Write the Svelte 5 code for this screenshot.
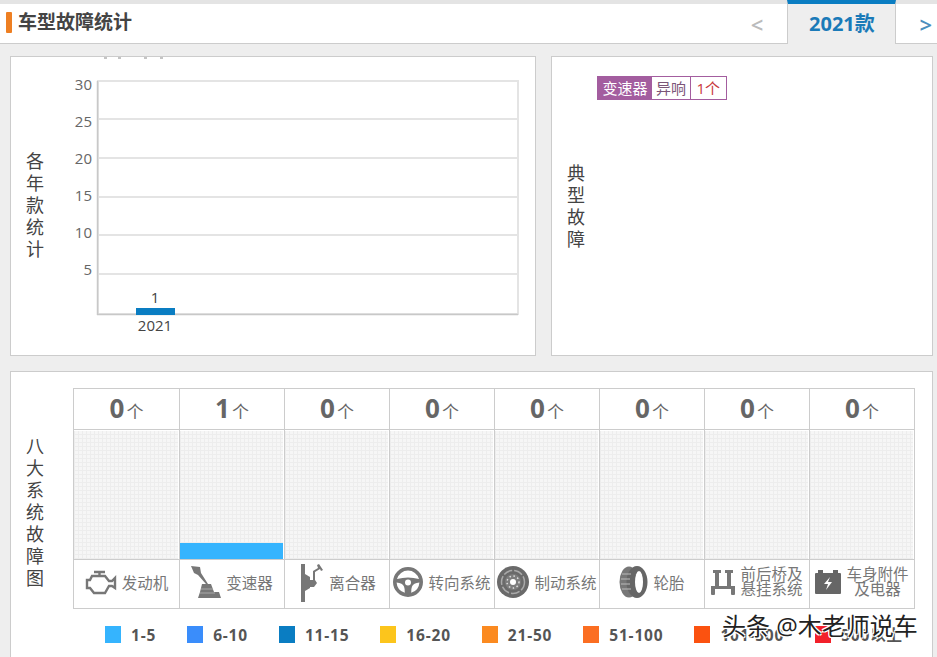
<script lang="ts">
  // y labels and grid lines don't share the same step in the original chart
  const yLabels = [
    { text: '30', y: 90 },
    { text: '25', y: 127 },
    { text: '20', y: 164 },
    { text: '15', y: 201 },
    { text: '10', y: 238 },
    { text: '5', y: 275 }
  ];
  const gridLines = [119, 158, 197, 235, 274];

  const systems = [
    { count: 0, icon: 'engine', label: ['发动机'] },
    { count: 1, icon: 'gearbox', label: ['变速器'] },
    { count: 0, icon: 'clutch', label: ['离合器'] },
    { count: 0, icon: 'steering', label: ['转向系统'] },
    { count: 0, icon: 'brake', label: ['制动系统'] },
    { count: 0, icon: 'tire', label: ['轮胎'] },
    { count: 0, icon: 'axle', label: ['前后桥及', '悬挂系统'] },
    { count: 0, icon: 'battery', label: ['车身附件', '及电器'] }
  ];

  const legend = [
    { text: '1-5', color: '#35b4fe' },
    { text: '6-10', color: '#3a8dfb' },
    { text: '11-15', color: '#0a7dc2' },
    { text: '16-20', color: '#fcc51c' },
    { text: '21-50', color: '#fb8a20' },
    { text: '51-100', color: '#fb6e22' },
    { text: '101-500', color: '#fb5210' },
    { text: '500以上', color: '#f2202a' }
  ];
</script>

<div class="page">
  <header class="top">
    <div class="title"><i class="mark"></i><span class="title-text">车型故障统计</span></div>
    <span class="arrow prev">&lt;</span>
    <div class="tab">2021款</div>
    <span class="arrow next">&gt;</span>
  </header>

  <div class="panels">
    <section class="panel">
      <svg class="chart" viewBox="11 57 524 298" width="524" height="298">
        <g fill="#c4c4c4">
          <rect x="104" y="57" width="3" height="2" />
          <rect x="118" y="57" width="3" height="2" />
          <rect x="144" y="57" width="3" height="2" />
          <rect x="160" y="57" width="3" height="2" />
        </g>
        <rect x="98" y="81" width="420" height="233" fill="none" stroke="#e4e4e4" stroke-width="2" />
        {#each gridLines as y}
          <line x1="98" x2="518" y1={y} y2={y} stroke="#e4e4e4" stroke-width="2" />
        {/each}
        <line x1="97.5" x2="97.5" y1="81" y2="315" stroke="#c8c8c8" stroke-width="1.5" />
        <line x1="97" x2="518" y1="314.5" y2="314.5" stroke="#c8c8c8" stroke-width="1.5" />
        {#each yLabels as l}
          <text class="ylabel" x="92" y={l.y} text-anchor="end">{l.text}</text>
        {/each}
        <rect x="136" y="308" width="39" height="7" fill="#0a7dc2" />
        <text class="xlabel" x="155" y="303" text-anchor="middle">1</text>
        <text class="xlabel" x="155" y="331" text-anchor="middle">2021</text>
        <foreignObject x="26" y="150" width="18" height="112">
          <div class="vlabel">各年款统计</div>
        </foreignObject>
      </svg>
    </section>

    <section class="panel faults">
      <div class="vlabel">典型故障</div>
      <div class="tag">
        <span class="tag-name">变速器</span>
        <span class="tag-type">异响</span>
        <span class="tag-count">1个</span>
      </div>
    </section>
  </div>

  <section class="panel systems">
    <div class="systems-row">
      <div class="side"><div class="vlabel">八大系统故障图</div></div>
      <div class="table">
        {#each systems as s}
          <div class="col">
            <div class="count"><b>{s.count}</b>个</div>
            <div class="plot">
              {#if s.count > 0}
                <div class="bar" style="height: {s.count * 16}px"></div>
              {/if}
            </div>
            <div class="sys">
              {#if s.icon === 'engine'}
                <svg width="32" height="25" viewBox="0 0 32 25" fill="none" stroke="#777" stroke-width="2.4">
                  <path d="M9 2h11M14.500 2v4M7 6h13l4 5h3l3-3v10l-3-2h-3l-4 7H9l-4-5H2V10h3z" />
                </svg>
              {:else if s.icon === 'gearbox'}
                <svg width="30" height="34" viewBox="0 0 30 34" fill="#777">
                  <path d="M0 1l9 1 1 6 7 11h-2L7 10 3 8z" />
                  <path d="M11 19h9l3 8h5l2 6H7l2-6z" />
                  <path d="M10 24h12M9 28h15" stroke="#aaa" stroke-width="1" />
                </svg>
              {:else if s.icon === 'clutch'}
                <svg width="26" height="39" viewBox="0 0 26 39" fill="#777">
                  <rect x="3" y="1" width="4" height="38" />
                  <path d="M7 11l5 3v11l-5 3z" />
                  <path d="M12 17h5l2 3-3 4h-4z" />
                  <path d="M15 18V8l5-3-1-3 2-1 4 6-2 1-1-2-5 3v9z" />
                </svg>
              {:else if s.icon === 'steering'}
                <svg width="30" height="30" viewBox="0 0 30 30" fill="#777">
                  <path fill-rule="evenodd" d="M15 0a15 15 0 1 1 0 30a15 15 0 1 1 0-30zM15 3.500a11.500 11.500 0 0 0-11 8.500q11-3 22 0a11.500 11.500 0 0 0-11-8.500zM3.600 15.500q6 .5 7.400 4 1 2.500.8 6.300A11.500 11.500 0 0 1 3.600 15.500zM26.400 15.500q-6 .5-7.400 4-1 2.500-.8 6.300A11.500 11.500 0 0 0 26.400 15.500zM15 12.500a3 3 0 1 0 0 6a3 3 0 1 0 0-6z" />
                </svg>
              {:else if s.icon === 'brake'}
                <svg width="32" height="32" viewBox="0 0 32 32">
                  <circle cx="16" cy="16" r="16" fill="#6a6a6a" />
                  <circle cx="16" cy="16" r="11.500" fill="none" stroke="#aaa" stroke-width="1.500" stroke-dasharray="9 2" />
                  <circle cx="16" cy="16" r="8" fill="#7d7d7d" />
                  <circle cx="16" cy="16" r="6" fill="none" stroke="#ddd" stroke-width="1.500" stroke-dasharray="1.500 2.500" />
                  <circle cx="16" cy="16" r="3" fill="#fff" />
                </svg>
              {:else if s.icon === 'tire'}
                <svg width="29" height="32" viewBox="0 0 29 32">
                  <ellipse cx="10" cy="16" rx="9.500" ry="15.500" fill="#777" />
                  <ellipse cx="18" cy="16" rx="10.500" ry="16" fill="#666" />
                  <ellipse cx="20" cy="16" rx="4" ry="11" fill="#fff" />
                  <path d="M3 8h9M2 13h9M2 18h9M3 23h9" stroke="#bbb" stroke-width="1.200" />
                </svg>
              {:else if s.icon === 'axle'}
                <svg width="24" height="26" viewBox="0 0 24 26" fill="#777">
                  <rect x="2" y="1" width="8" height="3" />
                  <rect x="14" y="1" width="8" height="3" />
                  <rect x="4" y="1" width="4" height="19" />
                  <rect x="16" y="1" width="4" height="19" />
                  <rect x="0" y="17" width="24" height="3" />
                  <rect x="0" y="17" width="4" height="9" rx="1" />
                  <rect x="20" y="17" width="4" height="9" rx="1" />
                </svg>
              {:else if s.icon === 'battery'}
                <svg width="26" height="24" viewBox="0 0 26 24" fill="#666">
                  <rect x="3" y="0" width="5" height="3" />
                  <rect x="18" y="0" width="5" height="3" />
                  <rect x="0" y="3" width="26" height="21" rx="1" />
                  <path d="M15 7l-6 7h4l-2 6 6-8h-4z" fill="#fff" />
                </svg>
              {/if}
              <div class="sys-name" class:double={s.label.length > 1}>
                {#each s.label as line}
                  <div>{line}</div>
                {/each}
              </div>
            </div>
          </div>
        {/each}
      </div>
    </div>

    <div class="legend">
      {#each legend as item}
        <div class="legend-item">
          <i class="swatch" style="background: {item.color}"></i>
          {item.text}
        </div>
      {/each}
    </div>
  </section>

  <div class="watermark">头条 @木老师说车</div>
</div>

<style>
  :global(body) {
    margin: 0;
    background: #eee;
  }

  .page {
    position: relative;
    width: 937px;
    height: 657px;
    overflow: hidden;
    background: #eee;
    font-family: "Open Sans", "Noto Sans CJK SC", sans-serif;
    color: #444;
  }

  .top {
    display: flex;
    align-items: center;
    height: 44px;
    box-sizing: border-box;
    background: #fff;
    border-top: 4px solid #e4e4e4;
    border-bottom: 1px solid #ccc;
  }

  .title {
    display: flex;
    align-items: center;
    flex: 1;
    margin-bottom: 2px;
    padding-left: 6px;
    font-size: 19px;
    font-weight: 700;
    color: #444;
  }

  .title-text {
    margin-top: -4px;
  }

  .mark {
    width: 6px;
    height: 21px;
    margin-right: 6px;
    border-radius: 1px;
    background: #ee7f22;
  }

  .arrow {
    font-size: 22px;
    font-weight: 600;
    line-height: 1;
  }

  .prev {
    margin-right: 24px;
    color: #bbb;
  }

  .next {
    margin: 0 5px 0 23px;
    color: #4b8fbd;
  }

  .tab {
    align-self: stretch;
    width: 109px;
    height: 44px;
    margin: -4px 0 -1px;
    box-sizing: border-box;
    border-top: 4px solid #0a7dc2;
    border-left: 1px solid #ccc;
    border-right: 1px solid #ccc;
    background: #eee;
    color: #1a7ab8;
    font-size: 20px;
    font-weight: 700;
    line-height: 40px;
    text-align: center;
  }

  .panels {
    display: grid;
    grid-template-columns: 526px 382px;
    gap: 15px;
    margin: 12px 0 0 10px;
  }

  .panel {
    box-sizing: border-box;
    height: 300px;
    background: #fff;
    border: 1px solid #ccc;
  }

  .chart {
    display: block;
  }

  .ylabel {
    font-size: 15px;
    fill: #666;
  }

  .xlabel {
    font-size: 15px;
    fill: #444;
  }

  .vlabel {
    width: 18px;
    font-size: 18px;
    line-height: 22px;
    color: #444;
    word-break: break-all;
  }

  .faults {
    display: flex;
    align-items: flex-start;
    padding: 105px 0 0 15px;
    position: relative;
  }

  .tag {
    display: flex;
    position: absolute;
    left: 45px;
    top: 19px;
    height: 24px;
    box-sizing: border-box;
    border: 1px solid #a35d9f;
    font-size: 15px;
    line-height: 22px;
  }

  .tag span {
    white-space: nowrap;
  }

  .tag-name {
    padding: 0 4.500px;
    background: #a35d9f;
    color: #fff;
  }

  .tag-type {
    padding: 0 4px;
    color: #7b5578;
    border-right: 1px solid #a35d9f;
  }

  .tag-count {
    padding: 0 6px 0 5.500px;
    color: #c8383c;
  }

  .systems {
    width: 923px;
    height: auto;
    min-height: 300px;
    margin: 15px 0 0 10px;
    padding-top: 16px;
  }

  .systems-row {
    display: flex;
  }

  .side {
    display: flex;
    align-items: center;
    width: 62px;
    padding-left: 15px;
    box-sizing: border-box;
    margin-top: 26px;
  }

  .table {
    display: grid;
    grid-template-columns: 106px repeat(7, 105px);
    border-left: 1px solid #ccc;
    border-top: 1px solid #ccc;
    border-bottom: 1px solid #ccc;
  }

  .col {
    display: flex;
    flex-direction: column;
    border-right: 1px solid #ccc;
  }

  .count {
    height: 41px;
    box-sizing: border-box;
    border-bottom: 1px solid #ccc;
    text-align: center;
    font-size: 17px;
    line-height: 39px;
    color: #666;
  }

  .count b {
    margin-right: 2px;
    font-size: 26px;
    font-weight: 700;
    color: #666;
  }

  .plot {
    display: flex;
    align-items: flex-end;
    height: 130px;
    box-sizing: border-box;
    padding: 1px 1px 0 0;
    border-bottom: 1px solid #ccc;
    background-color: #f6f6f6;
    background-clip: content-box;
    background-image:
      repeating-linear-gradient(0deg, #ededed 0 1px, transparent 1px 4px),
      repeating-linear-gradient(90deg, #ededed 0 1px, transparent 1px 4px);
    background-origin: content-box;
  }

  .bar {
    width: 100%;
    background: #35b4fe;
  }

  .sys {
    display: flex;
    align-items: center;
    justify-content: center;
    gap: 5px;
    height: 48px;
    box-sizing: border-box;
    padding-bottom: 4px;
  }

  .sys-name {
    font-size: 15.500px;
    color: #777;
    white-space: nowrap;
  }

  .sys-name.double {
    line-height: 15px;
    text-align: center;
  }

  .legend {
    display: flex;
    gap: 31px;
    margin: 17px 0 0 94px;
  }

  .legend-item {
    display: flex;
    align-items: center;
    gap: 10px;
    height: 17px;
    font-size: 15.500px;
    font-weight: 700;
    letter-spacing: 0.800px;
    color: #555;
    white-space: nowrap;
  }

  .swatch {
    width: 16px;
    height: 17px;
  }

  .watermark {
    position: absolute;
    left: 722px;
    top: 610px;
    font-size: 24px;
    line-height: 32px;
    color: #222;
    white-space: nowrap;
    text-shadow: 1px 1px 0 #fff, -1px -1px 0 #fff, 1px -1px 0 #fff, -1px 1px 0 #fff;
  }
</style>
